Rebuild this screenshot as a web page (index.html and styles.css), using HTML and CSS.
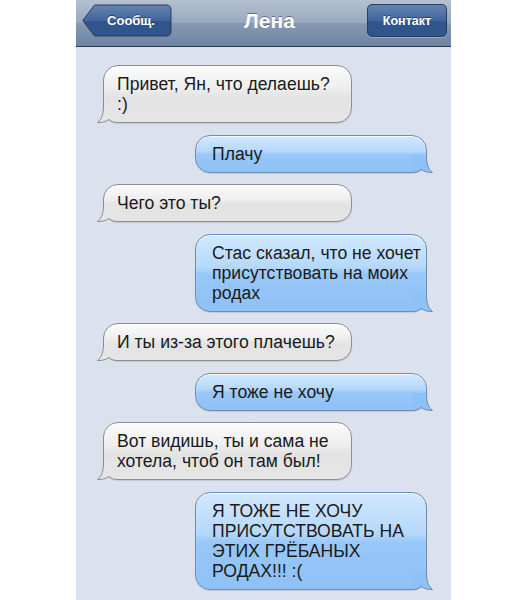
FILE: index.html
```html
<!DOCTYPE html>
<html lang="ru">
<head>
    <meta charset="UTF-8">
    <meta name="viewport" content="width=device-width, initial-scale=1.0">
    <title>Лена</title>
    <link rel="stylesheet" href="styles.css">
</head>
<body>
    <div class="phone">
        <header class="navbar">
            <a class="nav-btn back">
                <svg class="back-shape" viewBox="0 0 90 33" preserveAspectRatio="none">
                    <defs>
                        <linearGradient id="backGrad" x1="0" y1="0" x2="0" y2="1">
                            <stop offset="0" stop-color="#6585b2"/>
                            <stop offset="0.5" stop-color="#41669b"/>
                            <stop offset="0.52" stop-color="#30568d"/>
                            <stop offset="1" stop-color="#2f558d"/>
                        </linearGradient>
                    </defs>
                    <path d="M0.8,16.5 L12.5,1 H84 Q89,1 89,6 V27 Q89,32 84,32 H12.5 Z" fill="url(#backGrad)" stroke="#2b3d5a" stroke-width="1"/>
                </svg>
                <span class="nav-label">Сообщ.</span>
            </a>
            <h1 class="title">Лена</h1>
            <a class="nav-btn contact"><span class="nav-label">Контакт</span></a>
        </header>

        <main class="thread">
            <div class="msg in">
                <svg class="tail" viewBox="0 0 20 18"><path class="tail-fill" d="M6.5,0 C6.5,9 5,14 0.5,17.5 C5,17.8 9,16.5 12,14.5 C14,16.5 17,17.5 20,17.5 L20,0 Z"/><path class="tail-line" d="M6.5,0 C6.5,9 5,14 0.5,17.5 C5,17.8 9,16.5 12,14.5 C14,16.5 17,17.5 20,17.5"/></svg>
                <p class="text">Привет, Ян, что делаешь?<br>:)</p>
            </div>
            <div class="msg out">
                <svg class="tail" viewBox="0 0 20 18"><path class="tail-fill" d="M13.5,0 C13.5,9 15,14 19.5,17.5 C15,17.8 11,16.5 8,14.5 C6,16.5 3,17.5 0,17.5 L0,0 Z"/><path class="tail-line" d="M13.5,0 C13.5,9 15,14 19.5,17.5 C15,17.8 11,16.5 8,14.5 C6,16.5 3,17.5 0,17.5"/></svg>
                <p class="text">Плачу</p>
            </div>
            <div class="msg in">
                <svg class="tail" viewBox="0 0 20 18"><path class="tail-fill" d="M6.5,0 C6.5,9 5,14 0.5,17.5 C5,17.8 9,16.5 12,14.5 C14,16.5 17,17.5 20,17.5 L20,0 Z"/><path class="tail-line" d="M6.5,0 C6.5,9 5,14 0.5,17.5 C5,17.8 9,16.5 12,14.5 C14,16.5 17,17.5 20,17.5"/></svg>
                <p class="text">Чего это ты?</p>
            </div>
            <div class="msg out">
                <svg class="tail" viewBox="0 0 20 18"><path class="tail-fill" d="M13.5,0 C13.5,9 15,14 19.5,17.5 C15,17.8 11,16.5 8,14.5 C6,16.5 3,17.5 0,17.5 L0,0 Z"/><path class="tail-line" d="M13.5,0 C13.5,9 15,14 19.5,17.5 C15,17.8 11,16.5 8,14.5 C6,16.5 3,17.5 0,17.5"/></svg>
                <p class="text">Стас сказал, что не хочет<br>присутствовать на моих<br>родах</p>
            </div>
            <div class="msg in">
                <svg class="tail" viewBox="0 0 20 18"><path class="tail-fill" d="M6.5,0 C6.5,9 5,14 0.5,17.5 C5,17.8 9,16.5 12,14.5 C14,16.5 17,17.5 20,17.5 L20,0 Z"/><path class="tail-line" d="M6.5,0 C6.5,9 5,14 0.5,17.5 C5,17.8 9,16.5 12,14.5 C14,16.5 17,17.5 20,17.5"/></svg>
                <p class="text">И ты из-за этого плачешь?</p>
            </div>
            <div class="msg out">
                <svg class="tail" viewBox="0 0 20 18"><path class="tail-fill" d="M13.5,0 C13.5,9 15,14 19.5,17.5 C15,17.8 11,16.5 8,14.5 C6,16.5 3,17.5 0,17.5 L0,0 Z"/><path class="tail-line" d="M13.5,0 C13.5,9 15,14 19.5,17.5 C15,17.8 11,16.5 8,14.5 C6,16.5 3,17.5 0,17.5"/></svg>
                <p class="text">Я тоже не хочу</p>
            </div>
            <div class="msg in">
                <svg class="tail" viewBox="0 0 20 18"><path class="tail-fill" d="M6.5,0 C6.5,9 5,14 0.5,17.5 C5,17.8 9,16.5 12,14.5 C14,16.5 17,17.5 20,17.5 L20,0 Z"/><path class="tail-line" d="M6.5,0 C6.5,9 5,14 0.5,17.5 C5,17.8 9,16.5 12,14.5 C14,16.5 17,17.5 20,17.5"/></svg>
                <p class="text">Вот видишь, ты и сама не<br>хотела, чтоб он там был!</p>
            </div>
            <div class="msg out">
                <svg class="tail" viewBox="0 0 20 18"><path class="tail-fill" d="M13.5,0 C13.5,9 15,14 19.5,17.5 C15,17.8 11,16.5 8,14.5 C6,16.5 3,17.5 0,17.5 L0,0 Z"/><path class="tail-line" d="M13.5,0 C13.5,9 15,14 19.5,17.5 C15,17.8 11,16.5 8,14.5 C6,16.5 3,17.5 0,17.5"/></svg>
                <p class="text">Я ТОЖЕ НЕ ХОЧУ<br>ПРИСУТСТВОВАТЬ НА<br>ЭТИХ ГРЁБАНЫХ<br>РОДАХ!!! :(</p>
            </div>
        </main>
    </div>
</body>
</html>
```

FILE: styles.css
```css
body {
    margin: 0;
    background-color: #ffffff;
    font-family: 'Liberation Sans', Arial, sans-serif;
}
.phone {
    width: 375px;
    min-height: 600px;
    margin-left: 76px;
    display: flex;
    flex-direction: column;
    background-color: #dce2ed;
}

/* top bar */
.navbar {
    height: 47px;
    box-sizing: border-box;
    padding: 0 4px 5px 6px;
    display: flex;
    align-items: center;
    justify-content: space-between;
    background: linear-gradient(#b4c1d2, #97a8bf 50%, #8799b3 51%, #6c83a2);
    border-bottom: 1px solid #2f3947;
}
.nav-btn {
    height: 33px;
    box-sizing: border-box;
    display: flex;
    align-items: center;
    justify-content: center;
    color: #ffffff;
    font-weight: bold;
    font-size: 13px;
    text-shadow: 0 -1px 0 rgba(0, 0, 0, 0.45);
}
.back {
    width: 90px;
    position: relative;
    padding-left: 8px;
}
.back-shape {
    position: absolute;
    left: 0;
    top: 0;
    width: 90px;
    height: 33px;
}
.nav-label {
    position: relative;
}
.contact {
    width: 80px;
    font-size: 12.5px;
    border: 1px solid #2b3d5a;
    border-radius: 5px;
    background: linear-gradient(#6585b2, #41669b 50%, #30568d 52%, #2f558d);
    box-shadow: 0 1px 0 rgba(255, 255, 255, 0.25);
}
.title {
    margin: 0;
    color: #ffffff;
    font-size: 21px;
    font-weight: bold;
    text-shadow: 0 -1px 0 rgba(0, 0, 0, 0.4);
}

/* messages */
.thread {
    flex: 1;
    display: flex;
    flex-direction: column;
    gap: 11.5px;
    padding-top: 18px;
}
.msg {
    position: relative;
    box-sizing: border-box;
    padding: 8px 8px 8px 13px;
    border-radius: 15px;
    font-size: 17.6px;
    line-height: 20px;
    color: #1a1a1a;
    white-space: nowrap;
}
.msg .text {
    position: relative;
    margin: 0;
}
.in {
    align-self: flex-start;
    margin-left: 27px;
    width: 249px;
    border: 1px solid #8d8d8d;
    background: linear-gradient(#fbfbfb, #eeeeee 40%, #e3e3e3 55%, #e5e5e5);
    box-shadow: inset 0 1px 1px rgba(255, 255, 255, 0.9), 0 1px 1px rgba(0, 0, 0, 0.12);
}
.out {
    align-self: flex-start;
    margin-left: 119px;
    width: 232px;
    padding-left: 16px;
    border: 1px solid #6e8cad;
    background: linear-gradient(#d2e8fe, #b5d8fb 42%, #98c7f8 52%, #8ec1f6);
    box-shadow: inset 0 1px 1px rgba(255, 255, 255, 0.8), 0 1px 1px rgba(0, 0, 0, 0.12);
}
.tail {
    position: absolute;
    bottom: -1px;
    width: 20px;
    height: 18px;
    overflow: visible;
}
.in .tail {
    left: -7px;
}
.out .tail {
    right: -7px;
}
.tail-line {
    fill: none;
    stroke-width: 1;
}
.in .tail-fill {
    fill: #e5e5e5;
}
.in .tail-line {
    stroke: #8d8d8d;
}
.out .tail-fill {
    fill: #8ec1f6;
}
.out .tail-line {
    stroke: #6e8cad;
}
```
